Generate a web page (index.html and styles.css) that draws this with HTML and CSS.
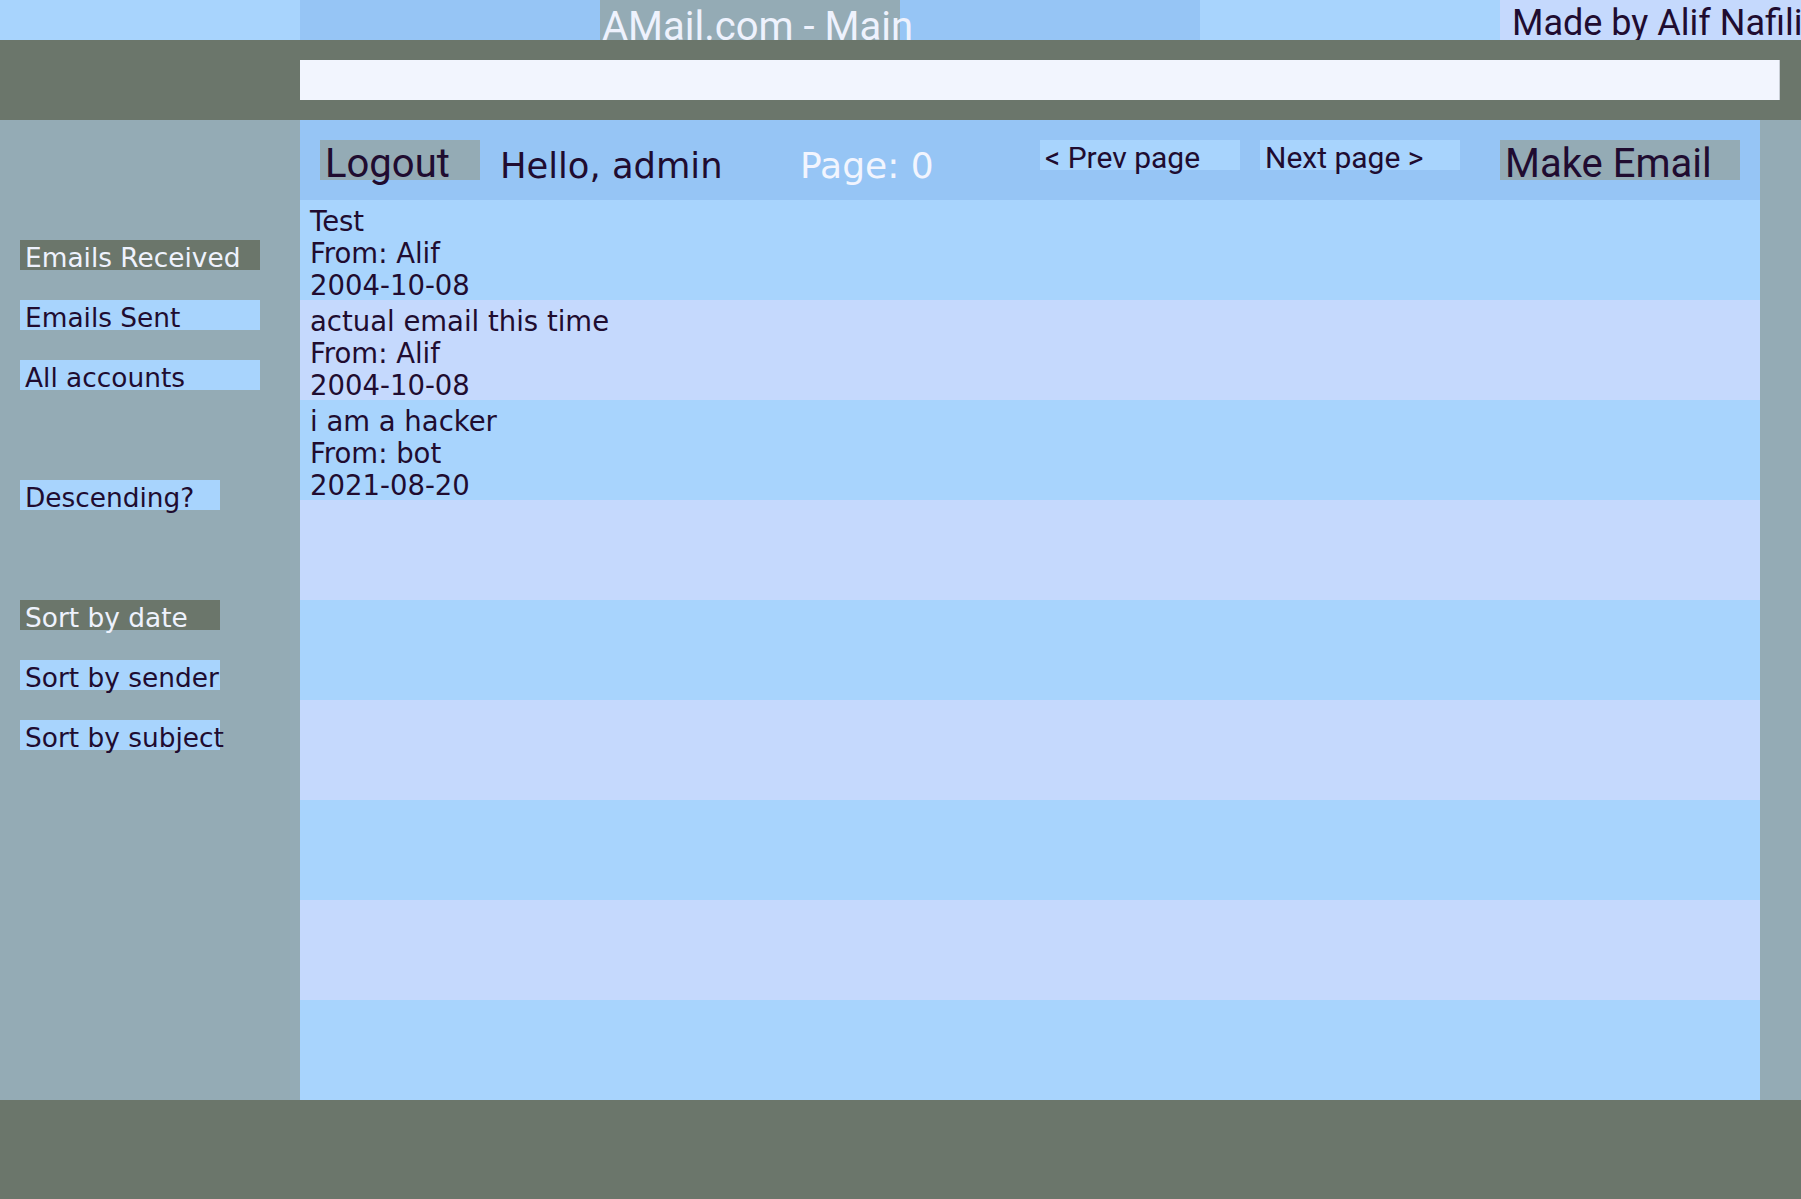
FILE: index.html
```html
<!DOCTYPE html>
<html lang="en">
<head>
<meta charset="utf-8">
<title>AMail.com - Main</title>
<link rel="stylesheet" href="styles.css">
</head>
<body>
<div class="page">
  <header class="topbar">
    <div class="tb tb-light"></div>
    <div class="tb tb-blue"></div>
    <div class="tb tb-grey"><span class="title">AMail.com - Main</span></div>
    <div class="tb tb-blue"></div>
    <div class="tb tb-light"></div>
    <div class="tb tb-lav"><span class="credit">Made by Alif Nafili</span></div>
  </header>
  <div class="searchband">
    <input class="search" type="text" aria-label="Search">
  </div>
  <main class="main">
    <nav class="sidebar">
      <div class="side-group">
        <div class="side-btn wide active">Emails Received</div>
        <div class="side-btn wide">Emails Sent</div>
        <div class="side-btn wide">All accounts</div>
      </div>
      <div class="side-group">
        <div class="side-btn">Descending?</div>
      </div>
      <div class="side-group">
        <div class="side-btn active">Sort by date</div>
        <div class="side-btn">Sort by sender</div>
        <div class="side-btn">Sort by subject</div>
      </div>
    </nav>
    <section class="content">
      <div class="toolbar">
        <div class="btn-big logout">Logout</div>
        <div class="hello">Hello, admin</div>
        <div class="pageno">Page: 0</div>
        <div class="btn-small">&lt; Prev page</div>
        <div class="btn-small">Next page &gt;</div>
        <div class="btn-big make">Make Email</div>
      </div>
      <div class="list">
        <div class="row odd">
          <div>Test</div>
          <div>From: Alif</div>
          <div>2004-10-08</div>
        </div>
        <div class="row even">
          <div>actual email this time</div>
          <div>From: Alif</div>
          <div>2004-10-08</div>
        </div>
        <div class="row odd">
          <div>i am a hacker</div>
          <div>From: bot</div>
          <div>2021-08-20</div>
        </div>
        <div class="row even"></div>
        <div class="row odd"></div>
        <div class="row even"></div>
        <div class="row odd"></div>
        <div class="row even"></div>
        <div class="row odd"></div>
      </div>
    </section>
    <div class="rightcol"></div>
  </main>
  <footer class="footer"></footer>
</div>
</body>
</html>
```
FILE: styles.css
```css
html, body {
  margin: 0;
  padding: 0;
  overflow: hidden;
}
body {
  width: 1801px;
  height: 1199px;
  font-family: "DejaVu Sans", sans-serif;
  color: #200c30;
}
.page {
  display: flex;
  flex-direction: column;
  width: 1801px;
  height: 1199px;
}
.topbar {
  display: grid;
  grid-template-columns: 300px 300px 300px 300px 300px 301px;
  height: 40px;
  overflow: clip;
}
.tb { height: 40px; white-space: nowrap; }
.tb-light { background: #a8d4fd; }
.tb-blue { background: #96c5f5; }
.tb-grey { background: #94abb5; z-index: 1; }
.tb-lav { background: #c5d9fd; }
.title {
  display: block;
  font-family: Roboto, sans-serif;
  font-size: 40px;
  color: #eef2fd;
  padding: 3px 0 0 2px;
}
.credit {
  display: block;
  font-family: Roboto, sans-serif;
  font-size: 36px;
  color: #200c30;
  padding: 2px 0 0 12px;
}
.searchband {
  height: 80px;
  background: #6b766b;
  box-sizing: border-box;
  padding: 20px 21px 20px 300px;
}
.search {
  display: block;
  width: 100%;
  height: 40px;
  box-sizing: border-box;
  margin: 0;
  border: 0;
  border-right: 1px solid #c9ced6;
  background: #f2f5fe;
  outline: none;
}
.main {
  display: grid;
  grid-template-columns: 300px 1460px 41px;
  height: 980px;
}
.sidebar {
  background: #94abb5;
  display: flex;
  flex-direction: column;
  gap: 90px;
  padding: 120px 0 0 20px;
}
.side-group {
  display: flex;
  flex-direction: column;
  gap: 30px;
}
.side-btn {
  width: 200px;
  height: 30px;
  box-sizing: border-box;
  padding: 3px 0 0 5px;
  background: #a8d4fd;
  font-size: 26.4px;
  line-height: 30px;
  white-space: nowrap;
  color: #200c30;
}
.side-btn.wide { width: 240px; }
.side-btn.active {
  background: #6b766b;
  color: #eef2fd;
}
.content {
  display: flex;
  flex-direction: column;
}
.toolbar {
  height: 80px;
  box-sizing: border-box;
  background: #96c5f5;
  padding: 20px;
  display: flex;
  align-items: flex-start;
  gap: 20px;
  white-space: nowrap;
}
.btn-big {
  height: 40px;
  box-sizing: border-box;
  padding-left: 5px;
  background: #94abb5;
  font-family: Roboto, sans-serif;
  font-size: 40px;
}
.logout { width: 160px; }
.make { width: 240px; margin-left: auto; }
.hello {
  width: 280px;
  height: 40px;
  font-size: 35.3px;
  padding-top: 5px;
}
.pageno {
  width: 220px;
  height: 40px;
  font-size: 36px;
  padding-top: 5px;
  color: #f2f5fe;
}
.btn-small {
  width: 200px;
  height: 30px;
  box-sizing: border-box;
  padding-left: 5px;
  background: #a8d4fd;
  font-family: Roboto, sans-serif;
  font-size: 30px;
}
.list {
  display: flex;
  flex-direction: column;
}
.row {
  height: 100px;
  box-sizing: border-box;
  padding: 5px 10px 0;
  font-size: 27.5px;
  line-height: 32px;
}
.row.odd { background: #a8d4fd; }
.row.even { background: #c5d9fd; }
.rightcol { background: #94abb5; }
.footer {
  height: 99px;
  background: #6b766b;
}
```
